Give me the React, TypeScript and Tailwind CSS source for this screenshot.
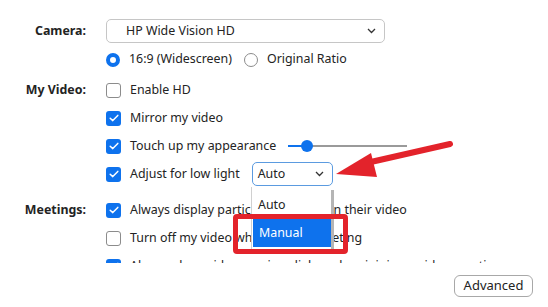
import React from "react";

const Check = ({ checked }: { checked: boolean }) =>
  checked ? (
    <div className="w-[15px] h-[15px] rounded-[3px] bg-[#0e72ed] flex items-center justify-center shrink-0">
      <svg width="10" height="8" viewBox="0 0 10 8">
        <polyline points="1.2,4.2 3.8,6.6 8.8,1.4" fill="none" stroke="white" strokeWidth="1.5" strokeLinecap="round" strokeLinejoin="round" />
      </svg>
    </div>
  ) : (
    <div className="w-[15px] h-[15px] rounded-[3px] border border-[#8c8c8c] bg-white shrink-0" />
  );

const Chevron = () => (
  <svg width="9" height="6" viewBox="0 0 9 6">
    <polyline points="1,1 4.5,4.5 8,1" fill="none" stroke="#333" strokeWidth="1.3" />
  </svg>
);

const Row = ({ checked, children, h = "h-[28px]" }: { checked: boolean; children: React.ReactNode; h?: string }) => (
  <div className={`flex items-center ${h}`}>
    <Check checked={checked} />
    <div className="ml-[9px] flex items-center whitespace-nowrap">{children}</div>
  </div>
);

export default function App() {
  return (
    <div
      className="relative w-[548px] h-[307px] bg-white overflow-hidden text-[12.4px] text-[#232323]"
      style={{ fontFamily: '"Noto Sans", "Open Sans", sans-serif' }}
    >
      <div className="h-[263px] overflow-hidden pt-[19px]">
        {/* Camera */}
        <div className="flex">
          <div className="w-[86px] text-right font-bold h-[24px] leading-[24px]">Camera:</div>
          <div className="ml-[20px]">
            <div className="w-[279px] h-[24px] rounded-[5px] border border-[#c6c6c6] flex items-center justify-between pl-[19px] pr-[8px]">
              <span>HP Wide Vision HD</span>
              <Chevron />
            </div>
            <div className="h-[33px] flex items-center">
              <div className="w-[14px] h-[14px] rounded-full border-[4px] border-[#0e72ed] bg-white" />
              <span className="ml-[9px]">16:9 (Widescreen)</span>
              <div className="ml-[12px] w-[14px] h-[14px] rounded-full border border-[#8c8c8c] bg-white" />
              <span className="ml-[9px]">Original Ratio</span>
            </div>
          </div>
        </div>
        {/* My Video */}
        <div className="flex">
          <div className="w-[86px] text-right font-bold h-[28px] leading-[28px]">My Video:</div>
          <div className="ml-[20px]">
            <Row checked={false}>Enable HD</Row>
            <Row checked>Mirror my video</Row>
            <Row checked>
              <span>Touch up my appearance</span>
              <div className="ml-[12px] relative w-[119px] h-[12px] flex items-center">
                <div className="h-[2px] w-[19px] bg-[#0e72ed]" />
                <div className="h-[2px] flex-1 bg-[#9a9a9a]" />
                <div className="absolute left-[13px] top-[0px] w-[12px] h-[12px] rounded-full bg-[#0e72ed]" />
              </div>
            </Row>
            <Row checked>
              <span>Adjust for low light</span>
              <div className="ml-[12px] w-[81px] h-[24px] rounded-[5px] border border-[#5b9be0] flex items-center justify-between pl-[5px] pr-[8px]">
                <span>Auto</span>
                <Chevron />
              </div>
            </Row>
          </div>
        </div>
        {/* Meetings */}
        <div className="flex mt-[8px]">
          <div className="w-[86px] text-right font-bold h-[28px] leading-[28px]">Meetings:</div>
          <div className="ml-[20px]">
            <Row checked>Always display participant names on their video</Row>
            <Row checked={false}>Turn off my video when joining meeting</Row>
            <Row checked>Always show video preview dialog when joining a video meeting</Row>
          </div>
        </div>
      </div>

      {/* Advanced button */}
      <div className="flex justify-end pr-[15px] mt-[12px]">
        <div className="w-[79px] h-[22px] rounded-[6px] border border-[#a8a8a8] flex items-center justify-center text-[13px]">
          Advanced
        </div>
      </div>

      {/* Dropdown list overlay */}
      <div className="absolute left-[251px] top-[187px] w-[83px] h-[64px] flex">
        <div className="w-[80px] bg-white border-l border-[#d0d0d0] pt-[4px]">
          <div className="h-[28px] flex items-center pl-[6px]">Auto</div>
          <div className="h-[28px] flex items-center pl-[6px] bg-[#0e72ed] text-white ml-[1px]">Manual</div>
        </div>
        <div className="w-[3px] mt-[3px] bg-[#b5b5b5]" />
      </div>

      {/* Red highlight box */}
      <div className="absolute left-[233px] top-[214px] w-[115px] h-[40px] rounded-[4px] border-[5px] border-[#e3232b]" />

      {/* Red arrow */}
      <svg className="absolute left-0 top-0" width="548" height="307" viewBox="0 0 548 307">
        <line x1="362" y1="164" x2="450" y2="144" stroke="#e3232b" strokeWidth="6" strokeLinecap="round" />
        <polygon points="336,174 371,153 377,177" fill="#e3232b" />
      </svg>
    </div>
  );
}
